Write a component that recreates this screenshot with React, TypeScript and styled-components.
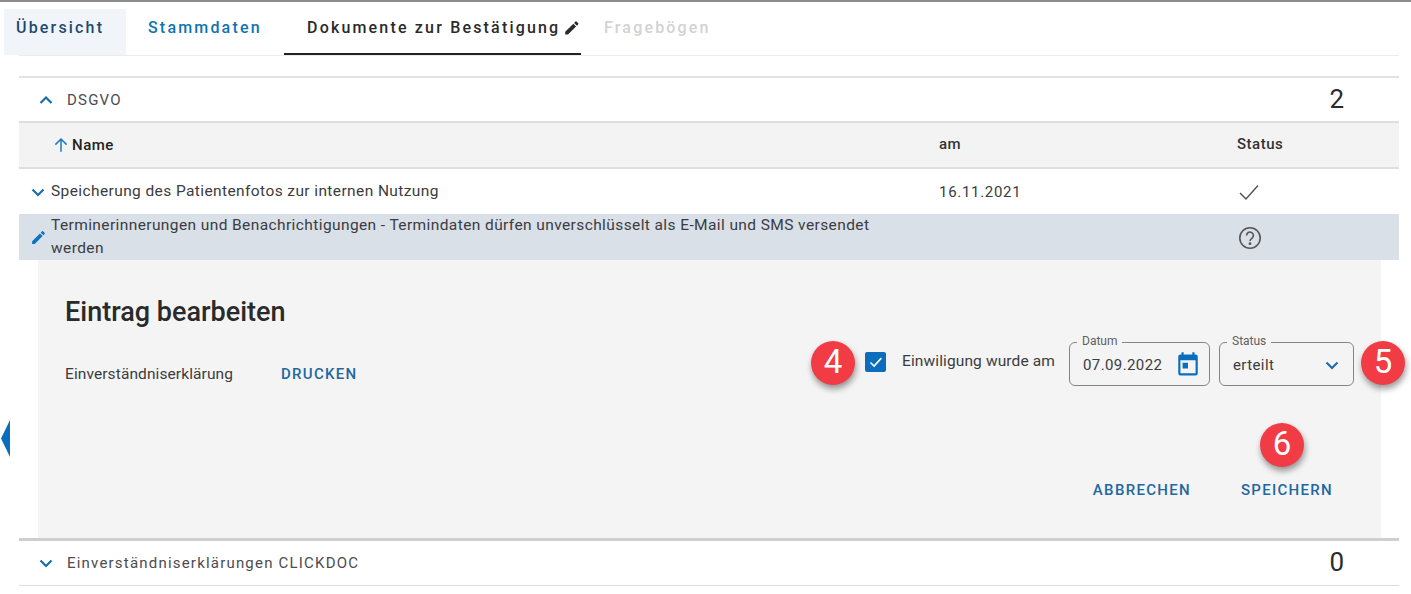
import React from "react";
import styled, { createGlobalStyle } from "styled-components";

const Global = createGlobalStyle`
  html, body { margin: 0; padding: 0; background: #fff; }
  body { font-family: Roboto, "Liberation Sans", sans-serif; color: #333; }
`;

const Page = styled.div`
  position: relative;
  width: 1411px;
  height: 594px;
  overflow: hidden;
  border-top: 2px solid #8c8c8c;
  box-sizing: border-box;
`;

const TabBar = styled.nav`
  display: flex;
  align-items: stretch;
  height: 46px;
  margin: 7px 0 0 4px;
`;

const Tab = styled.div<{ $w: number; $color: string; $bg?: string; $active?: boolean; $pl?: number }>`
  box-sizing: border-box;
  width: ${(p) => p.$w}px;
  padding: 9px 0 0 ${(p) => p.$pl ?? 0}px;
  font-size: 16px;
  font-weight: 500;
  letter-spacing: 2.18px;
  line-height: 20px;
  white-space: nowrap;
  color: ${(p) => p.$color};
  background: ${(p) => p.$bg ?? "transparent"};
  border-bottom: 2px solid ${(p) => (p.$active ? "#222" : "transparent")};
  display: flex;
  align-items: flex-start;
  gap: 3px;
`;

const TabPencil = styled.svg`
  width: 18px;
  height: 18px;
  margin-top: 1px;
  fill: #2a2a2a;
`;

const Content = styled.main`
  margin: 0 12px 0 19px;
  border-top: 1px solid #ececec;
  padding-top: 20px;
`;

const SectionHead = styled.div<{ $h: number; $top: number; $bottom: number; $tc: string }>`
  box-sizing: content-box;
  height: ${(p) => p.$h}px;
  display: flex;
  align-items: center;
  border-top: ${(p) => p.$top}px solid ${(p) => p.$tc};
  border-bottom: ${(p) => p.$bottom}px solid #dedede;
  padding: 0 55px 0 19px;
  font-size: 15px;
  letter-spacing: 1.2px;
  color: #4c4c50;
`;

const Chevron = styled.svg`
  width: 16px;
  height: 16px;
  flex: none;
  fill: none;
  stroke: #1b6ca8;
  stroke-width: 2.2;
`;

const SectionTitle = styled.span`
  margin-left: 13px;
  flex: 1;
`;

const Count = styled.span`
  font-size: 26px;
  line-height: 28px;
  margin-top: -2px;
  letter-spacing: 0;
  color: #2c2c2c;
`;

const Columns = styled.div`
  display: grid;
  grid-template-columns: 920px 298px 1fr;
  align-items: center;
`;

const TableHead = styled(Columns)`
  box-sizing: content-box;
  height: 42px;
  padding-bottom: 2px;
  background: #f3f3f3;
  border-bottom: 2px solid #dedede;
  font-size: 15px;
  font-weight: 500;
  letter-spacing: 0.5px;
  color: #333;
`;

const NameHead = styled.div`
  display: flex;
  align-items: center;
  padding-left: 33px;
  gap: 2px;
  color: #222;
  padding-top: 2px;
`;

const SortArrow = styled.svg`
  width: 18px;
  height: 18px;
  fill: none;
  stroke: #1b7ac0;
  stroke-width: 2;
`;

const Row = styled(Columns)<{ $bg?: string; $h: number }>`
  height: ${(p) => p.$h}px;
  background: ${(p) => p.$bg ?? "#fff"};
  font-size: 15.5px;
  letter-spacing: 0.4px;
  color: #3c3c40;
`;

const NameCell = styled.div`
  display: flex;
  align-items: center;
  padding-left: 11px;
  gap: 5px;
`;

const RowPencil = styled.svg`
  width: 17px;
  height: 17px;
  margin-right: -1px;
  fill: #0f74c0;
`;

const RowText = styled.div`
  width: 830px;
  line-height: 23px;
`;

const DateCell = styled.div`
  letter-spacing: 0.7px;
  font-size: 15px;
`;

const StatusIcon = styled.svg<{ $sw: number; $mt?: number }>`
  display: block;
  width: 26px;
  height: 26px;
  margin-top: ${(p) => p.$mt ?? 0}px;
  fill: none;
  stroke: #555;
  stroke-width: ${(p) => p.$sw};
`;

const Panel = styled.section`
  position: relative;
  box-sizing: border-box;
  height: 278px;
  margin: 0 18px 0 19px;
  padding: 36px 27px 0;
  background: #f4f4f4;
`;

const PanelTitle = styled.h2`
  margin: 0;
  font-size: 27px;
  font-weight: 500;
  line-height: 32px;
  color: #2a2a2a;
`;

const FormRow = styled.div`
  display: flex;
  align-items: flex-start;
  margin-top: 14px;
`;

const ConsentLabel = styled.span`
  margin-top: 23px;
  font-size: 15.5px;
  letter-spacing: 0.1px;
  line-height: 18px;
  width: 216px;
  color: #3c3c40;
`;

const TextButton = styled.button`
  padding: 0;
  border: 0;
  background: none;
  font: 500 15px/18px Roboto, "Liberation Sans", sans-serif;
  letter-spacing: 1.3px;
  color: #1f689f;
`;

const PrintButton = styled(TextButton)`
  margin-top: 23px;
`;

const Spacer = styled.div`
  flex: 1;
`;

const Check = styled.span`
  box-sizing: border-box;
  width: 21px;
  height: 20px;
  margin-top: 10px;
  border-radius: 2px;
  background: #0a6ebd;
  display: flex;
  align-items: center;
  justify-content: center;
`;

const ConsentText = styled.span`
  margin: 10px 14px 0 16px;
  font-size: 15.5px;
  letter-spacing: 0.12px;
  line-height: 18px;
  white-space: nowrap;
  color: #3c3c40;
`;

const Field = styled.div<{ $w: number; $mr: number }>`
  position: relative;
  box-sizing: border-box;
  width: ${(p) => p.$w}px;
  height: 44px;
  margin-right: ${(p) => p.$mr}px;
  padding: 1px 8px 0 13px;
  border: 1px solid #858585;
  border-radius: 6px;
  display: flex;
  align-items: center;
  justify-content: space-between;
  font-size: 15px;
  letter-spacing: 0.4px;
  color: #3c3c40;
`;

const FieldLabel = styled.span`
  position: absolute;
  top: -9px;
  left: 7px;
  padding: 0 5px;
  background: #f4f4f4;
  font-size: 12px;
  letter-spacing: 0;
  line-height: 14px;
  color: #5f5f5f;
`;

const SelectChevron = styled.svg`
  width: 16px;
  height: 16px;
  margin-right: 5px;
  fill: none;
  stroke: #1b6ca8;
  stroke-width: 2;
`;

const Actions = styled.div`
  display: flex;
  justify-content: flex-end;
  gap: 50px;
  margin-top: 95px;
  padding-right: 21px;
`;

const Badge = styled.span<{ $x: number; $y: number }>`
  position: absolute;
  left: ${(p) => p.$x}px;
  top: ${(p) => p.$y}px;
  width: 44px;
  height: 44px;
  border-radius: 50%;
  background: #f23c45;
  box-shadow: 1px 4px 6px rgba(0, 0, 0, 0.4);
  color: #fff;
  font-size: 33px;
  line-height: 42px;
  text-align: center;
`;

const SideHandle = styled.svg`
  position: absolute;
  left: 1px;
  top: 418px;
  width: 9px;
  height: 37px;
`;

const PENCIL = "M3 17.25V21h3.75L17.81 9.94l-3.75-3.75L3 17.25zM20.71 7.04a1 1 0 0 0 0-1.41l-2.34-2.34a1 1 0 0 0-1.41 0l-1.83 1.83 3.75 3.75 1.83-1.83z";

const Up = () => (
  <Chevron viewBox="0 0 16 16"><path d="M2.5 11 8 5.5 13.5 11" /></Chevron>
);
const Down = () => (
  <Chevron viewBox="0 0 16 16"><path d="M2.5 5.5 8 11l5.5-5.5" /></Chevron>
);

export default function App() {
  return (
    <Page>
      <Global />
      <TabBar>
        <Tab $w={122} $color="#1d4a6e" $bg="#f1f5f9" $pl={12}>Übersicht</Tab>
        <Tab $w={158} $color="#0f74b0" $pl={22}>Stammdaten</Tab>
        <Tab $w={297} $color="#2a2a2a" $active $pl={23}>
          Dokumente zur Bestätigung
          <TabPencil viewBox="0 0 24 24"><path d={PENCIL} /></TabPencil>
        </Tab>
        <Tab $w={140} $color="#d2d2d2" $pl={23}>Fragebögen</Tab>
      </TabBar>

      <Content>
        <SectionHead $h={43} $top={2} $bottom={2} $tc="#e2e2e2">
          <Up />
          <SectionTitle>DSGVO</SectionTitle>
          <Count>2</Count>
        </SectionHead>
        <TableHead>
          <NameHead>
            <SortArrow viewBox="0 0 24 24"><path d="M12 21V4M4.5 11.5 12 4l7.5 7.5" /></SortArrow>
            Name
          </NameHead>
          <div>am</div>
          <div>Status</div>
        </TableHead>
        <Row $h={45}>
          <NameCell>
            <Down />
            <RowText>Speicherung des Patientenfotos zur internen Nutzung</RowText>
          </NameCell>
          <DateCell>16.11.2021</DateCell>
          <div>
            <StatusIcon viewBox="0 0 26 26" $sw={1.5}><path d="M3 14l6 6L21 6.5" /></StatusIcon>
          </div>
        </Row>
        <Row $h={46} $bg="#d9e0e8">
          <NameCell>
            <RowPencil viewBox="0 0 24 24"><path d={PENCIL} /></RowPencil>
            <RowText>Terminerinnerungen und Benachrichtigungen - Termindaten dürfen unverschlüsselt als E-Mail und SMS versendet werden</RowText>
          </NameCell>
          <div />
          <div>
            <StatusIcon viewBox="0 0 26 26" $sw={1.6} $mt={1}>
              <circle cx="13" cy="13" r="10.2" />
              <path d="M9.6 10.4a3.4 3.4 0 1 1 5.4 2.8c-1.2.9-2 1.4-2 2.9" />
              <circle cx="13" cy="18.7" r="0.6" fill="#555" />
            </StatusIcon>
          </div>
        </Row>
        <Panel>
          <PanelTitle>Eintrag bearbeiten</PanelTitle>
          <FormRow>
            <ConsentLabel>Einverständniserklärung</ConsentLabel>
            <PrintButton>DRUCKEN</PrintButton>
            <Spacer />
            <Check>
              <svg width="16" height="16" viewBox="0 0 16 16" fill="none" stroke="#fff" strokeWidth="1.6">
                <path d="M2.5 8.5l3.6 3.6 7.2-8" />
              </svg>
            </Check>
            <ConsentText>Einwiligung wurde am</ConsentText>
            <Field $w={141} $mr={9}>
              <FieldLabel>Datum</FieldLabel>
              07.09.2022
              <svg width="26" height="28" viewBox="0 0 24 24" preserveAspectRatio="none">
                <path fill="#0a6ebd" d="M19 3h-1V1h-2v2H8V1H6v2H5a2 2 0 0 0-2 2v14a2 2 0 0 0 2 2h14a2 2 0 0 0 2-2V5a2 2 0 0 0-2-2zm0 16H5V8h14v11zM7 10h5v5H7z" />
              </svg>
            </Field>
            <Field $w={135} $mr={0}>
              <FieldLabel>Status</FieldLabel>
              erteilt
              <SelectChevron viewBox="0 0 16 16"><path d="M2.5 5.5 8 11l5.5-5.5" /></SelectChevron>
            </Field>
          </FormRow>
          <Actions>
            <TextButton>ABBRECHEN</TextButton>
            <TextButton>SPEICHERN</TextButton>
          </Actions>
        </Panel>
        <SectionHead $h={44} $top={3} $bottom={1} $tc="#cfcfcf">
          <Down />
          <SectionTitle>Einverständniserklärungen CLICKDOC</SectionTitle>
          <Count>0</Count>
        </SectionHead>
      </Content>

      <SideHandle viewBox="0 0 9 37">
        <path fill="#0a6ebd" d="M9 0v37L0 18.5z" />
      </SideHandle>
      <Badge $x={811} $y={339}>4</Badge>
      <Badge $x={1361} $y={339}>5</Badge>
      <Badge $x={1260} $y={421}>6</Badge>
    </Page>
  );
}
